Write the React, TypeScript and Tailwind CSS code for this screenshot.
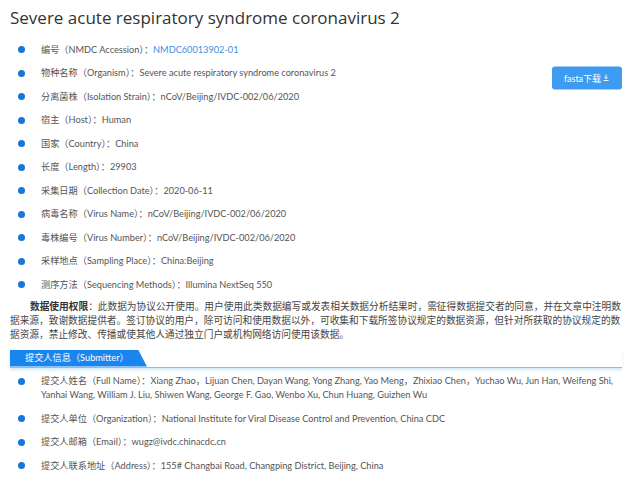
import { ReactNode } from 'react';

const fontStack = "font-['Lato','Noto_Sans_CJK_SC',sans-serif]";

const basicInfo: { label: string; value: ReactNode }[] = [
  { label: '编号（NMDC Accession）：', value: <span className="text-[#3b8fdf]">NMDC60013902-01</span> },
  { label: '物种名称（Organism）：', value: 'Severe acute respiratory syndrome coronavirus 2' },
  { label: '分离菌株（Isolation Strain）：', value: 'nCoV/Beijing/IVDC-002/06/2020' },
  { label: '宿主（Host）：', value: 'Human' },
  { label: '国家（Country）：', value: 'China' },
  { label: '长度（Length）：', value: '29903' },
  { label: '采集日期（Collection Date）：', value: '2020-06-11' },
  { label: '病毒名称（Virus Name）：', value: 'nCoV/Beijing/IVDC-002/06/2020' },
  { label: '毒株编号（Virus Number）：', value: 'nCoV/Beijing/IVDC-002/06/2020' },
  { label: '采样地点（Sampling Place）：', value: 'China:Beijing' },
  { label: '测序方法（Sequencing Methods）：', value: 'Illumina NextSeq 550' },
];

const submitterInfo: { label: string; value: ReactNode }[] = [
  {
    label: '提交人姓名（Full Name）：',
    value: (
      <>
        <span className="whitespace-nowrap">
          Xiang Zhao，Lijuan Chen, Dayan Wang, Yong Zhang, Yao Meng，Zhixiao Chen，Yuchao Wu, Jun Han, Weifeng Shi,
        </span>
        <br />
        Yanhai Wang, William J. Liu, Shiwen Wang, George F. Gao, Wenbo Xu, Chun Huang, Guizhen Wu
      </>
    ),
  },
  { label: '提交人单位（Organization）：', value: 'National Institute for Viral Disease Control and Prevention, China CDC' },
  { label: '提交人邮箱（Email）：', value: 'wugz@ivdc.chinacdc.cn' },
  { label: '提交人联系地址（Address）：', value: '155# Changbai Road, Changping District, Beijing, China' },
];

const Dot = () => <span className="block w-[7px] h-[7px] rounded-full bg-[#1677d9] shrink-0" />;

const DownloadButton = () => (
  <button className="h-[23px] w-[70px] rounded-[3px] bg-[#3d9bf2] text-white text-[9px] flex items-center justify-center gap-[1px] translate-y-[4.5px]">
    fasta下载
    <svg width="8" height="8" viewBox="0 0 8 8" fill="none" stroke="white" strokeWidth="0.9">
      <path d="M4 1v4.2M2.3 3.6L4 5.3l1.7-1.7M1.5 7h5" />
    </svg>
  </button>
);

export default function App() {
  return (
    <div className={`w-[641px] h-[485px] bg-white overflow-hidden pl-[10px] pr-[19px] ${fontStack}`}>
      <h1 className="text-[17px] leading-[24px] pt-[6px] text-[#333] font-['Open_Sans',sans-serif]">
        Severe acute respiratory syndrome coronavirus 2
      </h1>

      <ul className="mt-[8px]">
        {basicInfo.map((item, i) => (
          <li key={i} className="h-[23.5px] flex items-center text-[9.2px] text-[#555]">
            <span className="w-[31px] pl-[7.5px] flex"><Dot /></span>
            <span className="flex-1">
              {item.label}
              {item.value}
            </span>
            {i === 1 && <DownloadButton />}
          </li>
        ))}
      </ul>

      <p className="mt-[2px] text-[9.7px] leading-[14px] text-[#444] indent-[20px]">
        <b className="text-[#333]">数据使用权限</b>：此数据为协议公开使用。用户使用此类数据编写或发表相关数据分析结果时，需征得数据提交者的同意，并在文章中注明数据来源，致谢数据提供者。签订协议的用户，除可访问和使用数据以外，可收集和下载所签协议规定的数据资源，但针对所获取的协议规定的数据资源，禁止修改、传播或使其他人通过独立门户或机构网络访问使用该数据。
      </p>

      <div className="mt-[9px] border-b-[1.5px] border-[#8fbfd8] shadow-[0_2px_3px_rgba(120,190,230,0.35)]">
        <div className="h-[17px] w-[137px] bg-[#1a85ee] text-white text-[9.2px] flex items-center pl-[15px] [clip-path:polygon(0_0,128px_0,137px_100%,0_100%)]">
          提交人信息（Submitter）
        </div>
      </div>

      <ul className="mt-[2px]">
        {submitterInfo.map((item, i) => (
          <li key={i} className="py-[4.75px] flex items-start text-[9.2px] leading-[14px] text-[#555]">
            <span className="w-[31px] pl-[7.5px] h-[14px] flex items-center"><Dot /></span>
            <span className="flex-1">
              {item.label}
              {item.value}
            </span>
          </li>
        ))}
      </ul>
    </div>
  );
}
